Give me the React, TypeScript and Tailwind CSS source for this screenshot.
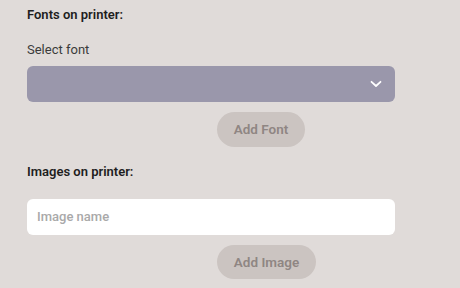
import React from "react";

export default function App() {
  return (
    <div className="w-[460px] h-[288px] bg-[#e0dbd9] overflow-hidden" style={{ fontFamily: "Roboto, 'Noto Sans', sans-serif" }}>
      <div className="pl-[27px] w-[395px] pt-[7px] flex flex-col">
        <div className="text-[13px] font-semibold text-[#1e1e1e] leading-[16px]">Fonts on printer:</div>
        <div className="mt-[19px] text-[13px] text-[#3b3b3b] leading-[16px]">Select font</div>
        <div className="mt-[8px] h-[36px] rounded-[6px] bg-[#9a97ab] flex items-center justify-end pr-[13px]">
          <svg width="12" height="8" viewBox="0 0 12 8" fill="none">
            <path d="M1.5 1.8 L6 6 L10.5 1.8" stroke="white" strokeWidth="1.8" strokeLinecap="round" strokeLinejoin="round" />
          </svg>
        </div>
        <div className="mt-[10px] flex pl-[190px]">
          <button className="h-[35px] w-[88px] rounded-full bg-[#cbc4c1] text-[#8f8683] text-[13.5px] font-semibold">Add Font</button>
        </div>
        <div className="mt-[17px] text-[13px] font-semibold text-[#1e1e1e] leading-[16px]">Images on printer:</div>
        <div className="mt-[19px] h-[36px] rounded-[6px] bg-white flex items-center pl-[10px]">
          <span className="text-[13px] font-medium text-[#a9a9a9]">Image name</span>
        </div>
        <div className="mt-[10px] flex pl-[190px]">
          <button className="h-[34px] w-[99px] rounded-full bg-[#cbc4c1] text-[#8f8683] text-[13.5px] font-semibold">Add Image</button>
        </div>
      </div>
    </div>
  );
}
